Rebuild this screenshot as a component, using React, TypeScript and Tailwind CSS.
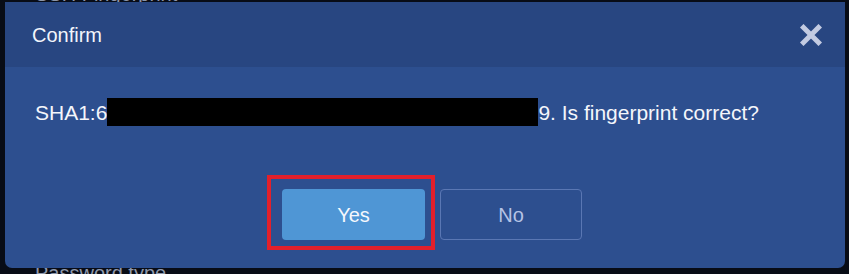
export default function App() {
    return (
        <div className="relative h-[274px] w-[849px] overflow-hidden bg-[#080c16] font-['Liberation_Sans',Arial,sans-serif]">
            {/* page behind the dialog */}
            <p className="absolute left-[35px] top-[-21px] text-[20px] text-[#8c95a8]">SSH Fingerprint</p>
            <p className="absolute left-[35px] top-[258px] text-[20px] text-[#8f98ab]">Password type</p>

            <div className="absolute left-[5px] top-[2px] flex h-[266px] w-[840px] flex-col overflow-hidden rounded-b-[7px] bg-[#2d4f8f]">
                <header className="flex h-[65px] shrink-0 items-center justify-between bg-[#284681] pl-[27px] pr-[23px]">
                    <h2 className="text-[20px] leading-none text-[#f2f5fb]">Confirm</h2>
                    <button aria-label="Close" className="flex h-[22px] w-[22px] items-center justify-center">
                        <svg viewBox="0 0 22 22" className="h-[22px] w-[22px]">
                            <path d="M3.5 3.5 L18.5 18.5 M18.5 3.5 L3.5 18.5" stroke="#c3cbe2" strokeWidth="5" strokeLinecap="square" />
                        </svg>
                    </button>
                </header>

                <main className="flex flex-col pt-[31px]">
                    <div className="flex h-[28px] items-center pl-[30px] text-[21px] leading-none text-[#f4f6fb]">
                        <span>SHA1:6</span>
                        <span className="h-[28px] w-[431px] bg-black" />
                        <span>9. Is fingerprint correct?</span>
                    </div>

                    <div className="mt-[63px] flex justify-center gap-[15px] pl-[14px]">
                        <div className="relative">
                            <span className="pointer-events-none absolute left-[-15px] right-[-10px] top-[-14px] bottom-[-10px] border-[4px] border-[#e3202b]" />
                            <button className="h-[51px] w-[143px] rounded-[4px] bg-[#4f96d5] text-[20px] text-[#f5f8fd]">Yes</button>
                        </div>
                        <button className="h-[51px] w-[142px] rounded-[4px] border border-[#5a77b3] text-[20px] text-[#b6c3e5]">No</button>
                    </div>
                </main>
            </div>
        </div>
    );
}
